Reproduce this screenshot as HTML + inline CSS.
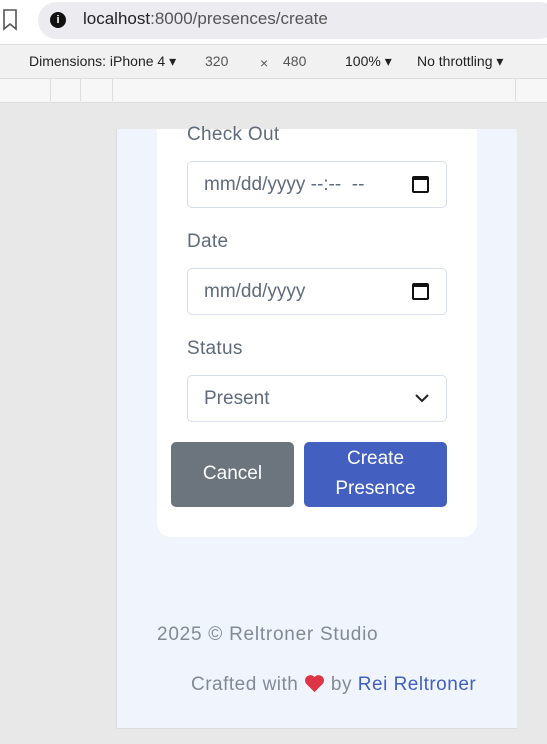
<!DOCTYPE html>
<html><head><meta charset="utf-8"><style>
*{margin:0;padding:0;box-sizing:border-box}
body{width:547px;height:744px;background:#e8e8e8;font-family:"Liberation Sans",sans-serif;position:relative;overflow:hidden}
.a{position:absolute}
.lbl{color:#5f6b7a;font-size:19px;letter-spacing:0.3px}
.inp{position:absolute;left:187px;width:260px;height:47px;background:#fff;border:1px solid #d7deea;border-radius:5px;color:#5f6b7a;font-size:19px;padding:12px 0 0 16px}
.cal{position:absolute;right:17px;top:14px;width:17px;height:17px;border:2px solid #111;border-top-width:4px;border-radius:2px}
</style></head><body>
<div class="a" style="left:0;top:0;width:547px;height:44px;background:#fff"></div>
<svg class="a" style="left:2px;top:8px" width="16" height="24" viewBox="0 0 16 24"><path d="M2 2h12v19l-6-5-6 5z" fill="none" stroke="#555" stroke-width="1.6"/></svg>
<div class="a" style="left:38px;top:2px;width:520px;height:37px;background:#ecebf0;border-radius:19px"></div>
<div class="a" style="left:50px;top:12px;width:16px;height:16px;border-radius:50%;background:#111;color:#fff;font-size:11px;font-weight:bold;text-align:center;line-height:16px">i</div>
<div class="a" style="left:83px;top:9px;font-size:17px;color:#222">localhost<span style="color:#555">:8000/presences/create</span></div>
<div class="a" style="left:0;top:44px;width:547px;height:35px;background:#f1f1f1;border-top:1px solid #ddd;border-bottom:1px solid #ddd"></div>
<div class="a" style="left:29px;top:53px;font-size:14px;color:#222">Dimensions: iPhone 4 ▾</div>
<div class="a" style="left:205px;top:53px;font-size:14px;color:#555">320</div>
<div class="a" style="left:260px;top:55px;font-size:14px;color:#555">×</div>
<div class="a" style="left:283px;top:53px;font-size:14px;color:#555">480</div>
<div class="a" style="left:345px;top:53px;font-size:14px;color:#222">100% ▾</div>
<div class="a" style="left:417px;top:53px;font-size:14px;color:#222">No throttling ▾</div>
<div class="a" style="left:0;top:79px;width:547px;height:24px;background:#f7f7f7;border-bottom:1px solid #ddd"></div>
<div class="a" style="left:50px;top:79px;width:1px;height:22px;background:#ddd"></div>
<div class="a" style="left:80px;top:79px;width:1px;height:22px;background:#ddd"></div>
<div class="a" style="left:112px;top:79px;width:1px;height:22px;background:#ddd"></div>
<div class="a" style="left:515px;top:79px;width:1px;height:22px;background:#ddd"></div>

<div class="a" style="left:116px;top:129px;width:401px;height:600px;background:#f0f5fd;border-left:1px solid #ddd;border-bottom:1px solid #ddd;overflow:hidden">
  <div class="a" style="left:40px;top:-20px;width:320px;height:428px;background:#fff;border-radius:14px"></div>
</div>
<div class="a lbl" style="left:187px;top:124px">Check Out</div>
<div class="inp" style="top:161px">mm/dd/yyyy --:-- &nbsp;--<div class="cal"></div></div>
<div class="a lbl" style="left:187px;top:231px">Date</div>
<div class="inp" style="top:268px">mm/dd/yyyy<div class="cal"></div></div>
<div class="a lbl" style="left:187px;top:338px">Status</div>
<div class="inp" style="top:375px">Present
<svg class="a" style="right:17px;top:17px" width="14" height="10" viewBox="0 0 14 10"><path d="M1 2l6 6 6-6" fill="none" stroke="#222" stroke-width="2"/></svg></div>
<div class="a" style="left:171px;top:442px;width:123px;height:65px;background:#6c757d;border-radius:5px;color:#fff;font-size:19px;text-align:center;line-height:63px">Cancel</div>
<div class="a" style="left:304px;top:442px;width:143px;height:65px;background:#4360c0;border-radius:5px;color:#fff;font-size:19px;text-align:center;line-height:30px;padding-top:2px">Create<br>Presence</div>
<div class="a" style="left:157px;top:624px;font-size:19px;color:#818a96;letter-spacing:0.75px">2025 © Reltroner Studio</div>
<div class="a" style="left:191px;top:674px;font-size:19px;color:#818a96;letter-spacing:0.5px">Crafted with <svg width="21" height="19" viewBox="0 0 24 22" style="vertical-align:-3px"><path d="M12 21L2.5 11.5A5.5 5.5 0 0 1 12 3.5a5.5 5.5 0 0 1 9.5 8z" fill="#dc3545"/></svg> by <span style="color:#4360c0">Rei Reltroner</span></div>
</body></html>
